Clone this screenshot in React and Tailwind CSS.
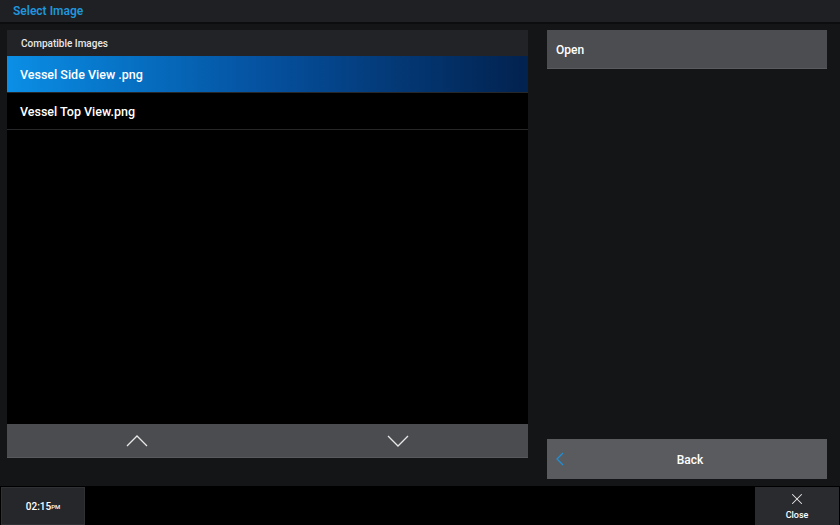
import { X } from "lucide-react";

const files = ["Vessel Side View .png", "Vessel Top View.png"];

function Chevron({ dir }) {
  const d = dir === "up" ? "M1 11 L11 1 L21 11" : "M1 1 L11 11 L21 1";
  return (
    <svg width="22" height="12" viewBox="0 0 22 12" fill="none">
      <path d={d} stroke="#e8e8e8" strokeWidth="1.3" />
    </svg>
  );
}

export default function App() {
  return (
    <div
      className="w-[840px] h-[525px] flex flex-col bg-[#141517] text-white overflow-hidden"
      style={{ fontFamily: "Roboto, 'Liberation Sans', sans-serif" }}
    >
      {/* Title bar */}
      <div className="h-[22px] bg-[#1f2023] flex items-center px-[13px] border-b-2 border-[#0c0d0e] box-content">
        <span className="text-[12px] font-semibold text-[#1f96dc]">Select Image</span>
      </div>

      {/* Main */}
      <div className="h-[462px] flex items-start gap-[19px] pl-[7px] pt-[6px]">
        {/* File list */}
        <div className="w-[521px] h-[428px] flex flex-col bg-black">
          <div className="h-[26px] bg-[#222326] flex items-center px-[14px] text-[10px] font-medium text-[#e8e8e8]">
            Compatible Images
          </div>
          {files.map((f, i) => (
            <div
              key={f}
              className={`h-[37px] flex items-center px-[13px] pt-[2px] text-[12.5px] font-medium border-b border-[#262729] ${
                i === 0 ? "bg-gradient-to-r from-[#0b8fe6] via-[#05509e] to-[#02224f]" : "bg-black"
              }`}
            >
              {f}
            </div>
          ))}
          <div className="flex-1" />
          <div className="h-[34px] bg-[#4b4c4f] border-b border-[#58595c] grid grid-cols-2">
            <div className="flex items-center justify-center">
              <Chevron dir="up" />
            </div>
            <div className="flex items-center justify-center">
              <Chevron dir="down" />
            </div>
          </div>
        </div>

        {/* Actions */}
        <div className="w-[280px] h-[449px] flex flex-col justify-between">
          <div className="h-[39px] bg-[#4c4d50] border-b border-[#5a5b5e] flex items-center px-[9px] pt-[2px] text-[12px] font-medium">
            Open
          </div>
          <div className="h-[40px] bg-[#5a5b5e] flex items-center px-[9px] text-[12px] font-medium">
            <svg width="8" height="14" viewBox="0 0 8 14" fill="none">
              <path d="M7 1 L1 7 L7 13" stroke="#1f8fd6" strokeWidth="1.3" />
            </svg>
            <span className="flex-1 text-center pr-[2px] pt-[2px]">Back</span>
          </div>
        </div>
      </div>

      {/* Bottom bar */}
      <div className="flex-1 bg-black flex items-end justify-between px-[1px]">
        <div className="w-[84px] h-[38px] bg-[#26272b] border border-[#303135] flex items-center justify-center text-[10px] font-medium">
          02:15<span className="text-[6px] leading-[6px] mt-[1px]">PM</span>
        </div>
        <div className="w-[84px] h-[38px] bg-[#2a2b2f] flex flex-col items-center justify-center gap-[1px] pt-[1px]">
          <X size={18} strokeWidth={1.4} className="text-[#eaeaea]" />
          <span className="text-[9px] font-medium">Close</span>
        </div>
      </div>
    </div>
  );
}
